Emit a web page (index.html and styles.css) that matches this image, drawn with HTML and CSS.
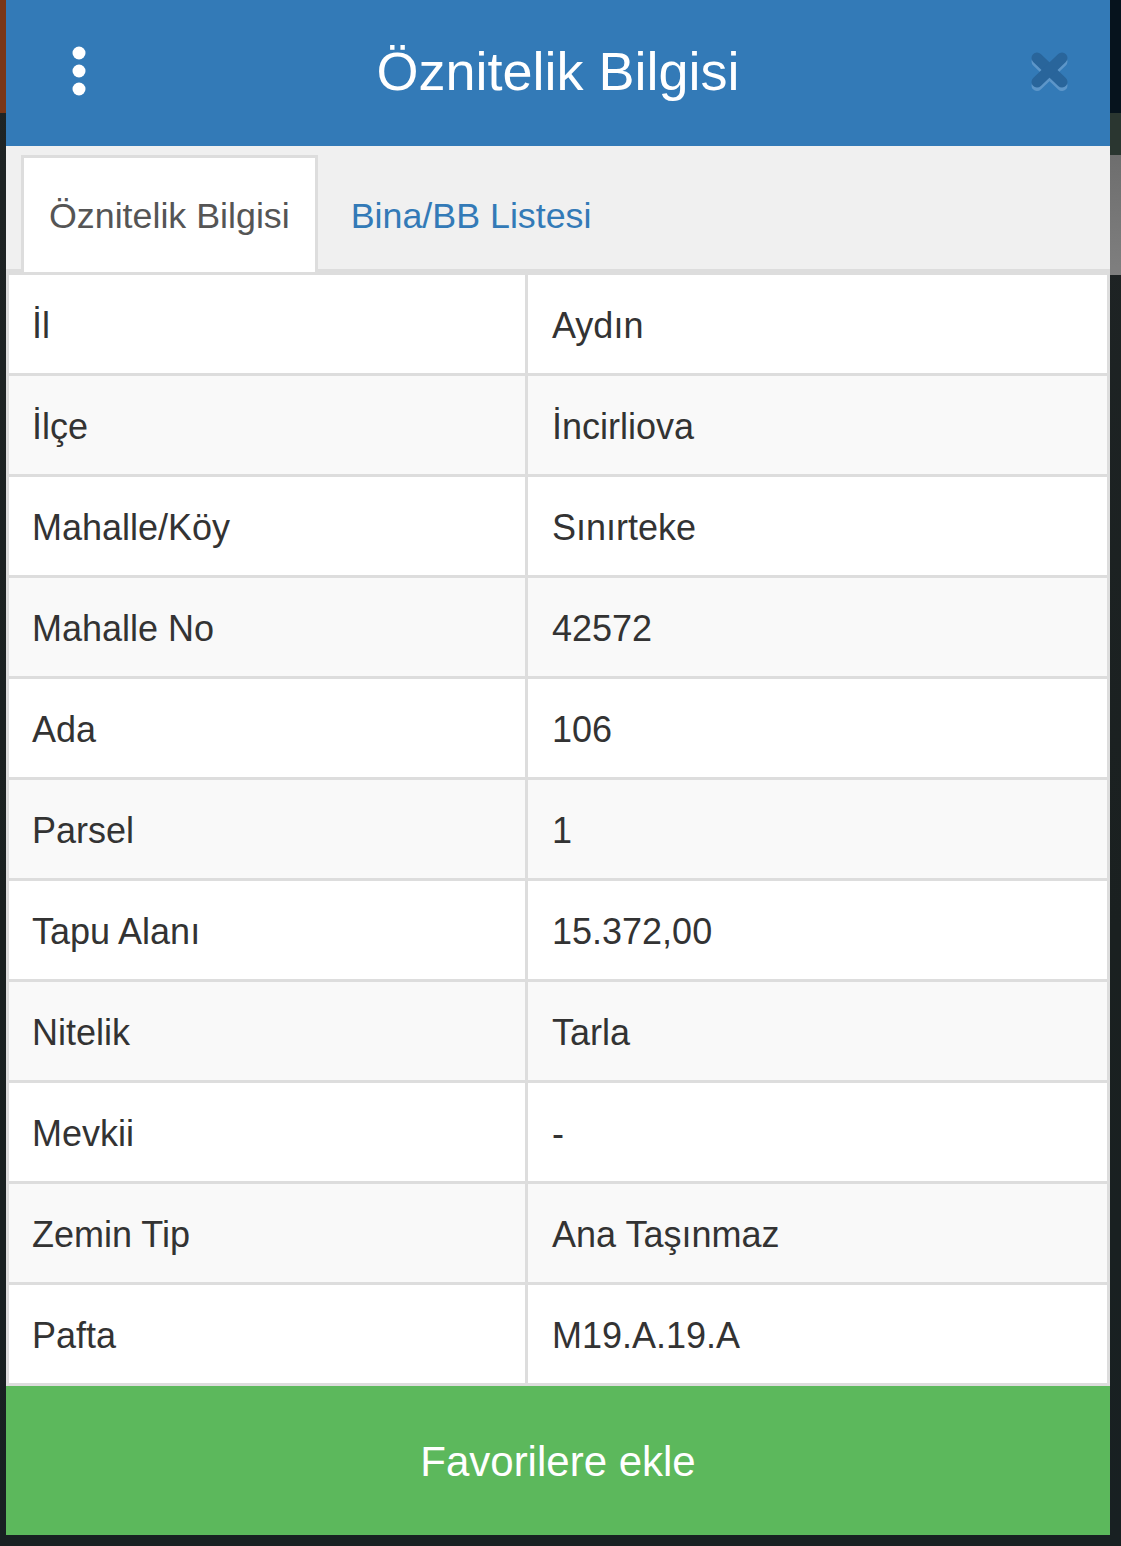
FILE: index.html
```html
<!DOCTYPE html>
<html lang="tr">
<head>
<meta charset="utf-8">
<title>Öznitelik Bilgisi</title>
<link rel="stylesheet" href="styles.css">
</head>
<body>
<div class="modal">
  <header class="modal-header">
    <div class="menu-btn" aria-label="Menü">
      <svg width="14" height="50" viewBox="0 0 14 50">
        <circle cx="7" cy="7" r="6.5" fill="#fff"/>
        <circle cx="7" cy="25" r="6.5" fill="#fff"/>
        <circle cx="7" cy="43" r="6.5" fill="#fff"/>
      </svg>
    </div>
    <h1 class="modal-title">Öznitelik Bilgisi</h1>
    <div class="close-btn" aria-label="Kapat">
      <svg width="37" height="40" viewBox="0 0 37 40">
        <g stroke="#5d96c9" stroke-width="11" stroke-linecap="round">
          <line x1="6" y1="9.5" x2="31" y2="33.5"/>
          <line x1="31" y1="9.5" x2="6" y2="33.5"/>
        </g>
        <g stroke="#29659b" stroke-width="11" stroke-linecap="round">
          <line x1="6" y1="6" x2="31" y2="30"/>
          <line x1="31" y1="6" x2="6" y2="30"/>
        </g>
      </svg>
    </div>
  </header>

  <nav class="tabs">
    <div class="tab active">Öznitelik Bilgisi</div>
    <div class="tab">Bina/BB Listesi</div>
  </nav>

  <div class="attrs">
    <div class="row"><div class="cell">İl</div><div class="cell">Aydın</div></div>
    <div class="row"><div class="cell">İlçe</div><div class="cell">İncirliova</div></div>
    <div class="row"><div class="cell">Mahalle/Köy</div><div class="cell">Sınırteke</div></div>
    <div class="row"><div class="cell">Mahalle No</div><div class="cell">42572</div></div>
    <div class="row"><div class="cell">Ada</div><div class="cell">106</div></div>
    <div class="row"><div class="cell">Parsel</div><div class="cell">1</div></div>
    <div class="row"><div class="cell">Tapu Alanı</div><div class="cell">15.372,00</div></div>
    <div class="row"><div class="cell">Nitelik</div><div class="cell">Tarla</div></div>
    <div class="row"><div class="cell">Mevkii</div><div class="cell">-</div></div>
    <div class="row"><div class="cell">Zemin Tip</div><div class="cell">Ana Taşınmaz</div></div>
    <div class="row"><div class="cell">Pafta</div><div class="cell">M19.A.19.A</div></div>
  </div>

  <button class="fav-btn" type="button">Favorilere ekle</button>
</div>
</body>
</html>
```

FILE: styles.css
```css
html, body {
  margin: 0;
  padding: 0;
}

body {
  width: 1121px;
  min-height: 1546px;
  font-family: "Liberation Sans", Arial, Helvetica, sans-serif;
  background:
    linear-gradient(to bottom, #7a3617 0, #7a3617 113px, transparent 113px) left top / 6px 100% no-repeat,
    linear-gradient(to bottom, #06131d 0, #06131d 113px, #2a3630 113px, #2a3630 155px, #6e6e6e 155px, #7f7f7f 275px, transparent 275px) right top / 11px 100% no-repeat,
    linear-gradient(to bottom, #1f2425, #1a2020 60%, #182022);
  overflow: hidden;
}

.modal {
  width: 1104px;
  margin-left: 6px;
}

/* Header */
.modal-header {
  height: 146px;
  background: #337ab7;
  display: grid;
  grid-template-columns: 1fr auto 1fr;
  align-items: center;
}

.menu-btn {
  padding-left: 66px;
  display: flex;
  align-items: center;
  padding-bottom: 5px;
}

.menu-btn svg {
  display: block;
}

.modal-title {
  margin: 0;
  color: #fff;
  font-weight: normal;
  font-size: 54px;
  line-height: 62px;
  padding-bottom: 4px;
}

.close-btn {
  justify-self: end;
  padding-right: 42px;
  padding-bottom: 2px;
}

.close-btn svg {
  display: block;
}

/* Tabs */
.tabs {
  display: flex;
  align-items: flex-end;
  background: #f0f0f0;
  padding: 9px 0 0 15px;
  border-bottom: 3px solid #dddddd;
  height: 114px;
}

.tab {
  box-sizing: border-box;
  height: 117px;
  margin-bottom: -3px;
  margin-right: 5px;
  padding: 2px 25px 0;
  border: 3px solid transparent;
  border-bottom: none;
  display: flex;
  align-items: center;
  font-size: 35.8px;
  color: #337ab7;
}

.tab.active {
  background: #fff;
  border-color: #dddddd;
  color: #555555;
}

/* Attribute table */
.attrs {
  border: 3px solid #dddddd;
  background: #dddddd;
  display: flex;
  flex-direction: column;
  gap: 3px;
}

.row {
  display: grid;
  grid-template-columns: 516px 1fr;
  column-gap: 3px;
  height: 98px;
}

.cell {
  background: #ffffff;
  display: flex;
  align-items: center;
  padding: 3px 0 0 23px;
  font-size: 36px;
  color: #333333;
}

.row .cell:last-child {
  padding-left: 24px;
}

.row:nth-child(even) .cell {
  background: #f9f9f9;
}

/* Footer button */
.fav-btn {
  display: block;
  width: 100%;
  height: 149px;
  border: none;
  margin: 0;
  background: #5cb85c;
  color: #fff;
  font-family: "Liberation Sans", Arial, Helvetica, sans-serif;
  font-size: 42px;
  padding: 2px 0 0 0;
  cursor: pointer;
}
```
